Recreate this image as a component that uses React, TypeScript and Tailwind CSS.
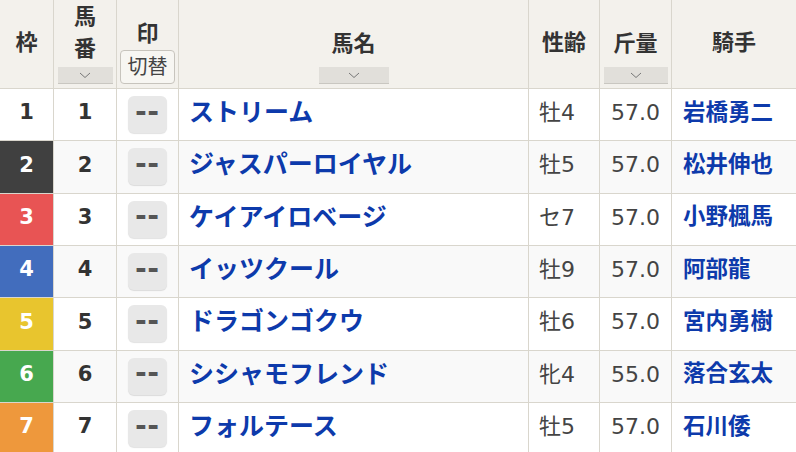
const rows = [
  { waku: 1, num: 1, name: "ストリーム", sex: "牡4", kinryo: "57.0", jockey: "岩橋勇二" },
  { waku: 2, num: 2, name: "ジャスパーロイヤル", sex: "牡5", kinryo: "57.0", jockey: "松井伸也" },
  { waku: 3, num: 3, name: "ケイアイロベージ", sex: "セ7", kinryo: "57.0", jockey: "小野楓馬" },
  { waku: 4, num: 4, name: "イッツクール", sex: "牡9", kinryo: "57.0", jockey: "阿部龍" },
  { waku: 5, num: 5, name: "ドラゴンゴクウ", sex: "牡6", kinryo: "57.0", jockey: "宮内勇樹" },
  { waku: 6, num: 6, name: "シシャモフレンド", sex: "牝4", kinryo: "55.0", jockey: "落合玄太" },
  { waku: 7, num: 7, name: "フォルテース", sex: "牡5", kinryo: "57.0", jockey: "石川倭" },
];

const wakuColors: Record<number, string> = {
  1: "bg-white text-[#333]",
  2: "bg-[#404040] text-white",
  3: "bg-[#e85454] text-white",
  4: "bg-[#426dbd] text-white",
  5: "bg-[#e8c52e] text-white",
  6: "bg-[#47a84f] text-white",
  7: "bg-[#ee983c] text-white",
};

function SortButton({ width }: { width: string }) {
  return (
    <div className={`${width} h-[17px] bg-[#e1dfda] border-b border-[#c9c7c1] flex items-center justify-center`}>
      <svg width="12" height="7" viewBox="0 0 12 7" fill="none">
        <path d="M1 1l5 4.5L11 1" stroke="#777" strokeWidth="1" />
      </svg>
    </div>
  );
}

const cell = "border-r border-b border-[#d9d6cd]";
const head = "h-[89px] bg-[#f3f1ec] text-[22px] font-bold";
const row = "h-[52.33px]";

export default function App() {
  return (
    <div
      className="w-[796px] h-[452px] overflow-hidden bg-white text-[#333]"
      style={{ fontFamily: '"DejaVu Sans", "Noto Sans CJK JP", sans-serif' }}
    >
      <div className="grid grid-cols-[54px_63px_62px_350px_71px_72px_1fr]">
        {/* header */}
        <div className={`${cell} ${head} flex items-center justify-center pb-[3px] leading-none`}>枠</div>
        <div className={`${cell} ${head} flex flex-col items-center justify-end pb-[4px]`}>
          <div className="leading-[32px] text-center">馬<br />番</div>
          <div className="mt-[2px]"><SortButton width="w-[55px]" /></div>
        </div>
        <div className={`${cell} ${head} flex flex-col items-center justify-end pb-[4px]`}>
          <div className="leading-none">印</div>
          <div className="mt-[5px] w-[55px] h-[34px] rounded-[4px] border border-[#c7c4bd] bg-[#f7f6f2] flex items-center justify-center text-[20px] font-normal text-[#444]">切替</div>
        </div>
        <div className={`${cell} ${head} flex flex-col items-center justify-end pb-[4px]`}>
          <div className="leading-none">馬名</div>
          <div className="mt-[12px]"><SortButton width="w-[70px]" /></div>
        </div>
        <div className={`${cell} ${head} flex items-center justify-center pb-[3px] leading-none`}>性齢</div>
        <div className={`${cell} ${head} flex flex-col items-center justify-end pb-[4px]`}>
          <div className="leading-none">斤量</div>
          <div className="mt-[12px]"><SortButton width="w-[64px]" /></div>
        </div>
        <div className={`border-b border-[#d9d6cd] ${head} flex items-center justify-center pb-[3px] leading-none`}>騎手</div>

        {rows.map((r, i) => {
          const bg = i % 2 === 1 ? "bg-[#f9f9f9]" : "bg-white";
          return [
            <div key={`w${i}`} className={`${cell} ${row} ${wakuColors[r.waku]} flex items-center justify-center pb-[3px] text-[21px] font-bold`}>{r.waku}</div>,
            <div key={`n${i}`} className={`${cell} ${row} ${bg} flex items-center justify-center pb-[3px] text-[21px] font-bold`}>{r.num}</div>,
            <div key={`m${i}`} className={`${cell} ${row} ${bg} flex items-center justify-center`}>
              <div className="w-[39px] h-[37px] rounded-[6px] bg-[#e8e8e8] shadow-[0_1px_1px_rgba(0,0,0,0.12)] flex items-center justify-center pb-[10px] text-[34px] leading-none font-bold text-[#555] tracking-[1px]" style={{ fontFamily: '"Liberation Sans", sans-serif' }}>--</div>
            </div>,
            <div key={`h${i}`} className={`${cell} ${row} ${bg} flex items-center pl-[10px] pb-[4px] text-[25px] font-bold text-[#0d3aab]`}>{r.name}</div>,
            <div key={`s${i}`} className={`${cell} ${row} ${bg} flex items-center pl-[10px] pb-[4px] text-[22px] text-[#444]`}>{r.sex}</div>,
            <div key={`k${i}`} className={`${cell} ${row} ${bg} flex items-center justify-center pb-[4px] text-[22px] text-[#444]`}>{r.kinryo}</div>,
            <div key={`j${i}`} className={`border-b border-[#d9d6cd] ${row} ${bg} flex items-center pl-[11px] pb-[4px] text-[22.5px] font-bold text-[#0d3aab]`}>{r.jockey}</div>,
          ];
        })}
      </div>
    </div>
  );
}
